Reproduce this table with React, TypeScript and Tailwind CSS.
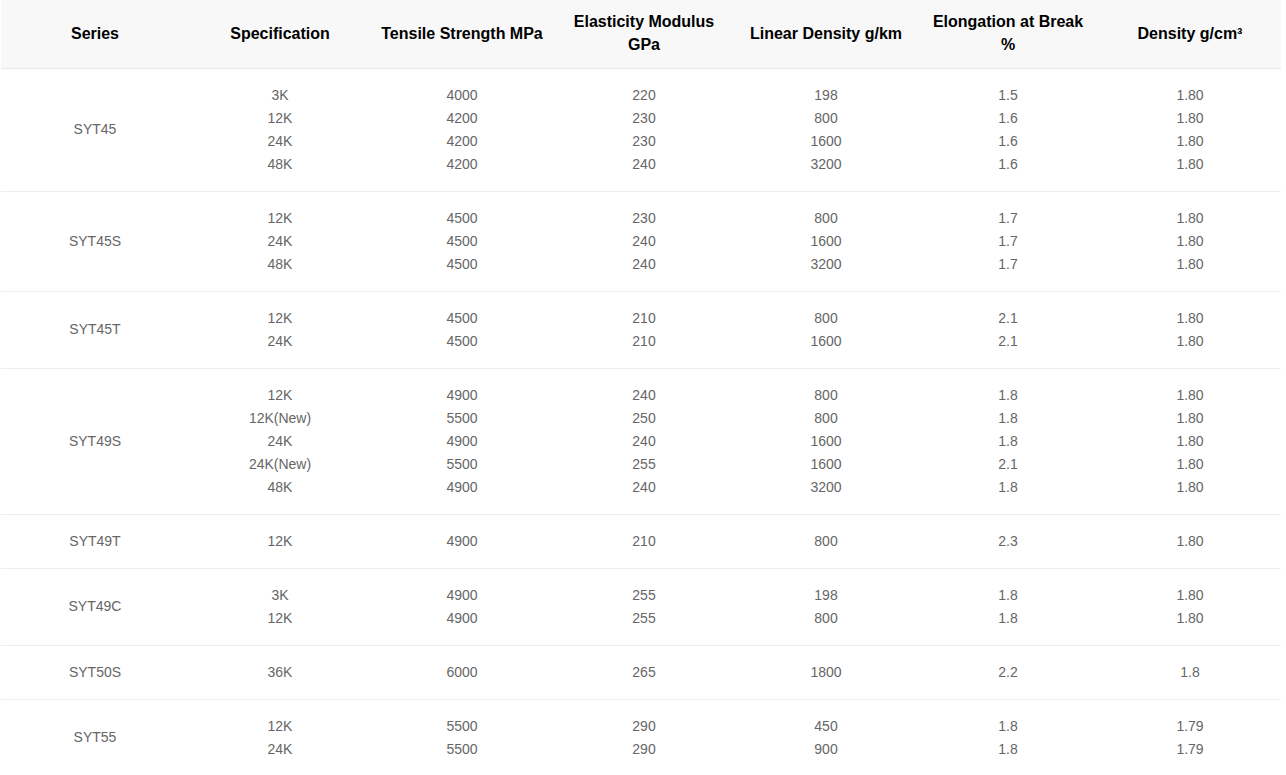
const rows: { series: string; items: string[][] }[] = [
  {
    series: "SYT45",
    items: [
      ["3K", "4000", "220", "198", "1.5", "1.80"],
      ["12K", "4200", "230", "800", "1.6", "1.80"],
      ["24K", "4200", "230", "1600", "1.6", "1.80"],
      ["48K", "4200", "240", "3200", "1.6", "1.80"],
    ],
  },
  {
    series: "SYT45S",
    items: [
      ["12K", "4500", "230", "800", "1.7", "1.80"],
      ["24K", "4500", "240", "1600", "1.7", "1.80"],
      ["48K", "4500", "240", "3200", "1.7", "1.80"],
    ],
  },
  {
    series: "SYT45T",
    items: [
      ["12K", "4500", "210", "800", "2.1", "1.80"],
      ["24K", "4500", "210", "1600", "2.1", "1.80"],
    ],
  },
  {
    series: "SYT49S",
    items: [
      ["12K", "4900", "240", "800", "1.8", "1.80"],
      ["12K(New)", "5500", "250", "800", "1.8", "1.80"],
      ["24K", "4900", "240", "1600", "1.8", "1.80"],
      ["24K(New)", "5500", "255", "1600", "2.1", "1.80"],
      ["48K", "4900", "240", "3200", "1.8", "1.80"],
    ],
  },
  {
    series: "SYT49T",
    items: [["12K", "4900", "210", "800", "2.3", "1.80"]],
  },
  {
    series: "SYT49C",
    items: [
      ["3K", "4900", "255", "198", "1.8", "1.80"],
      ["12K", "4900", "255", "800", "1.8", "1.80"],
    ],
  },
  {
    series: "SYT50S",
    items: [["36K", "6000", "265", "1800", "2.2", "1.8"]],
  },
  {
    series: "SYT55",
    items: [
      ["12K", "5500", "290", "450", "1.8", "1.79"],
      ["24K", "5500", "290", "900", "1.8", "1.79"],
    ],
  },
];

const headers: React.ReactNode[] = [
  "Series",
  "Specification",
  "Tensile Strength MPa",
  <>
    Elasticity Modulus
    <br />
    GPa
  </>,
  "Linear Density g/km",
  <>
    Elongation at Break
    <br />%
  </>,
  "Density g/cm³",
];

export default function App() {
  return (
    <div className="min-h-screen bg-white pl-px font-['Liberation_Sans',Arial,sans-serif]">
      <table className="w-[1280px] table-fixed border-collapse text-center">
        <colgroup>
          <col className="w-[188px]" />
          <col className="w-[182px]" />
          <col className="w-[182px]" />
          <col className="w-[182px]" />
          <col className="w-[182px]" />
          <col className="w-[182px]" />
          <col className="w-[182px]" />
        </colgroup>
        <thead>
          <tr className="h-[68px] border-b border-[#e9e8f2] bg-[#f8f8f8]">
            {headers.map((h, i) => (
              <th
                key={i}
                className="px-2 pt-[9px] pb-[10px] align-middle text-[16px] font-bold leading-[23px] text-black"
              >
                {h}
              </th>
            ))}
          </tr>
        </thead>
        <tbody className="text-[14px] leading-[23px] text-[#666]">
          {rows.map((r) => (
            <tr key={r.series} className="border-b border-[#ececf2]">
              <td className="px-2 py-[15px] align-middle">{r.series}</td>
              {[0, 1, 2, 3, 4, 5].map((c) => (
                <td key={c} className="px-2 py-[15px] align-middle">
                  {r.items.map((it, k) => (
                    <div key={k}>{it[c]}</div>
                  ))}
                </td>
              ))}
            </tr>
          ))}
        </tbody>
      </table>
    </div>
  );
}
